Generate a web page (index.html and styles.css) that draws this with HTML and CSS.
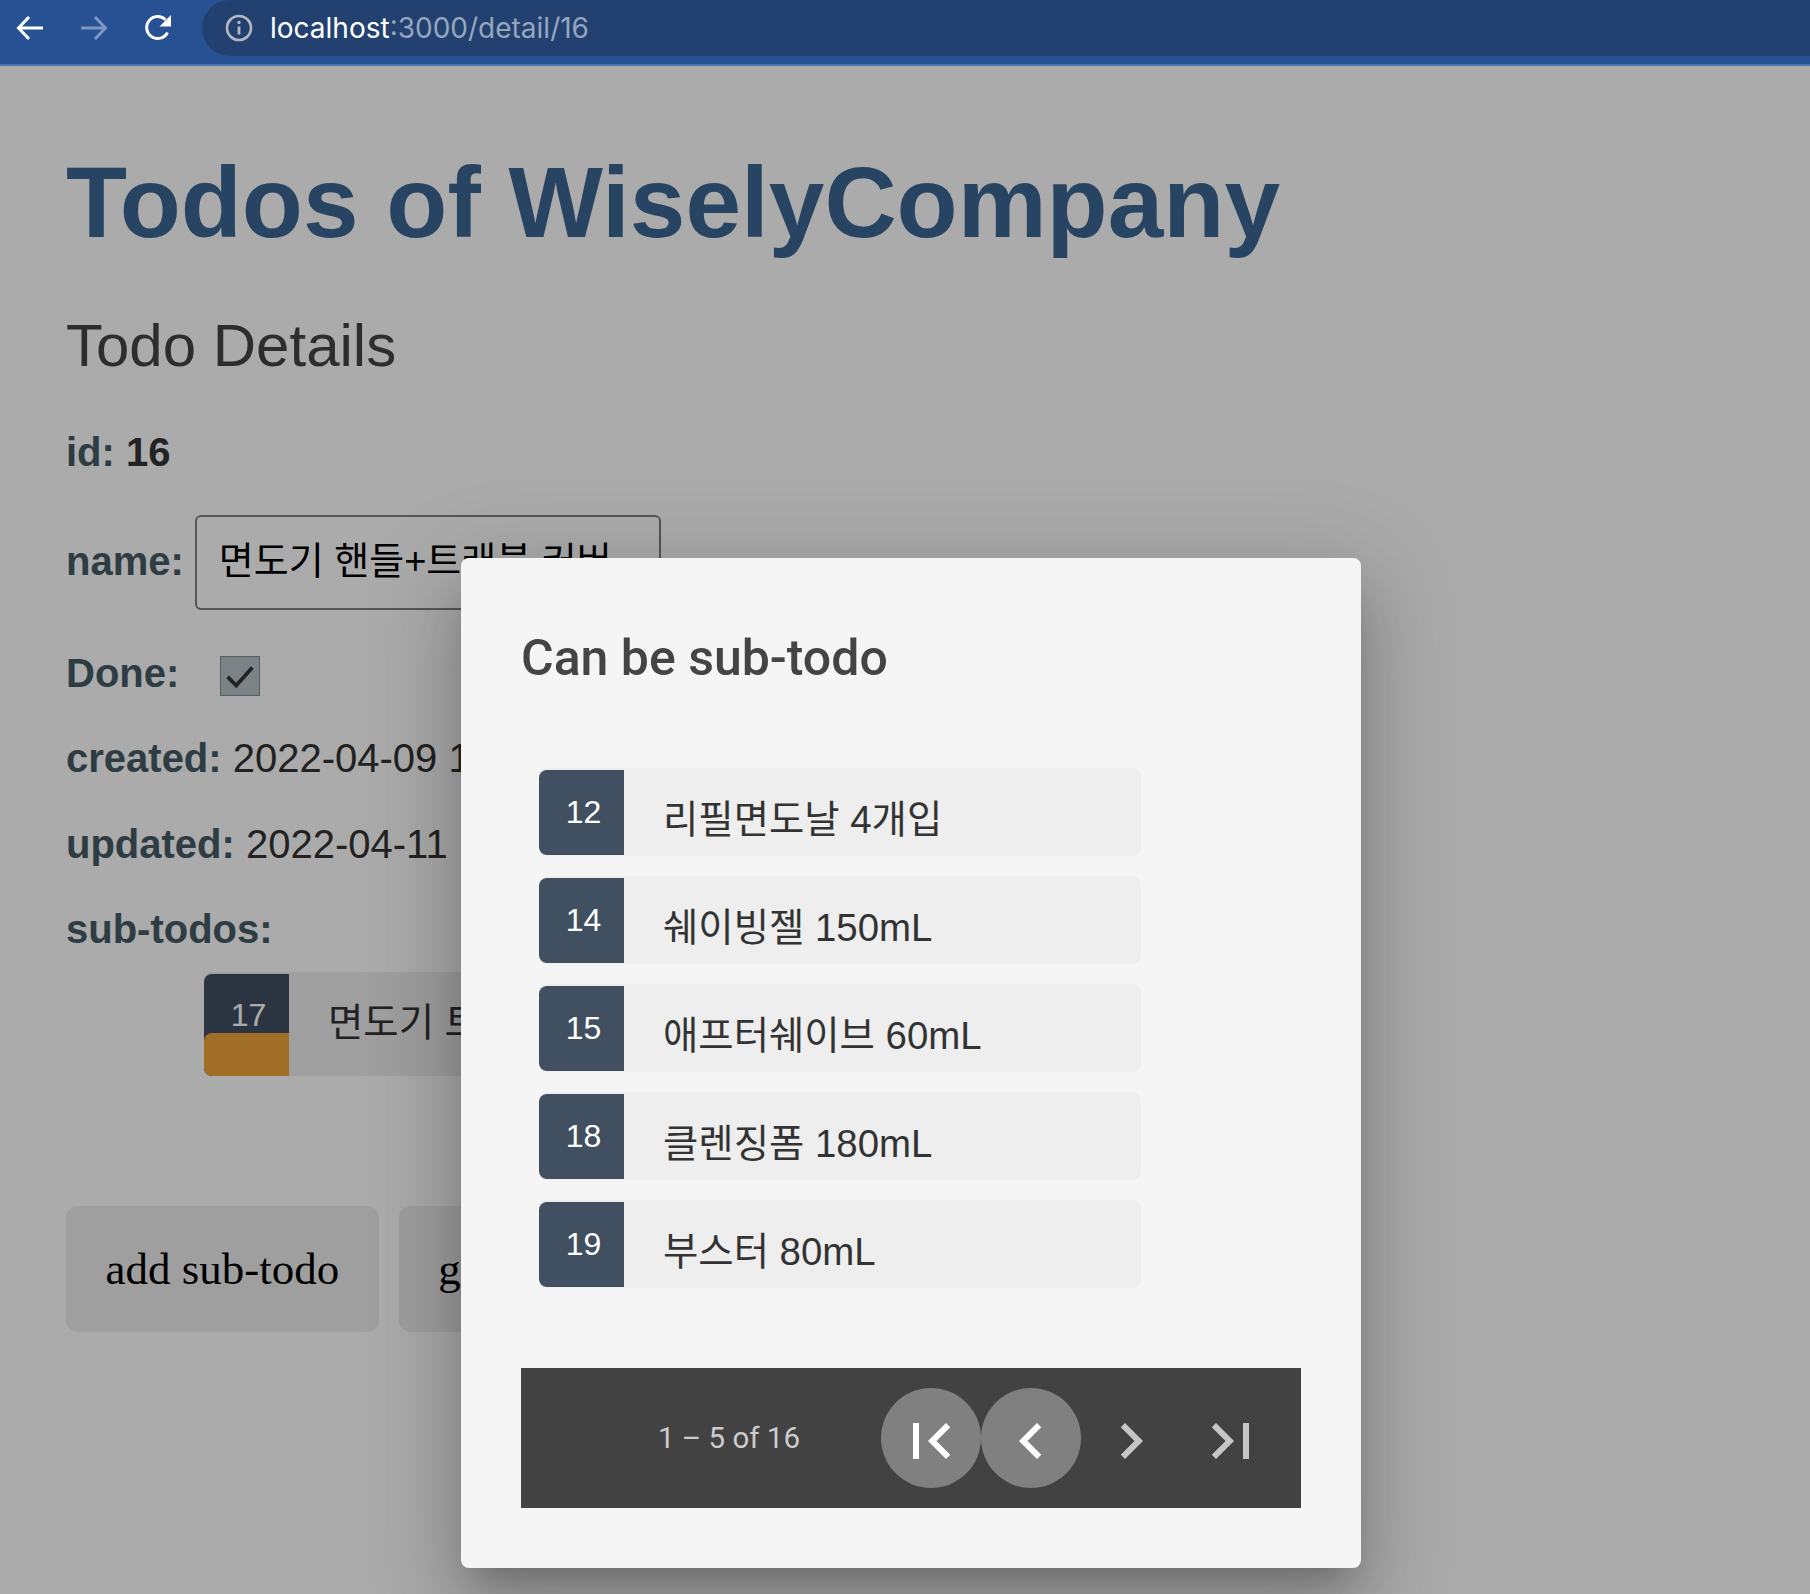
FILE: index.html
```html
<!DOCTYPE html>
<html lang="ko">
<head>
  <meta charset="UTF-8">
  <meta name="viewport" content="width=device-width, initial-scale=1.0">
  <title>Todos of WiselyCompany</title>
  <link rel="stylesheet" href="styles.css">
</head>
<body>

  <header class="toolbar">
    <svg class="nav-icon" viewBox="0 0 28 28"><path d="M27 14H3M13 3L2.500 14L13 25" fill="none" stroke="#fff" stroke-width="3"/></svg>
    <svg class="nav-icon nav-off" viewBox="0 0 28 28"><path d="M1 14H25M15 3L25.500 14L15 25" fill="none" stroke="#7d97c0" stroke-width="3"/></svg>
    <svg class="nav-icon" viewBox="0 0 28 28"><path d="M23.500 18.500A11 11 0 1 1 21.500 5.800" fill="none" stroke="#fff" stroke-width="3"/><path d="M27 1V12.500H15.500z" fill="#fff"/></svg>
    <div class="address">
      <svg class="info-icon" viewBox="0 0 28 28"><circle cx="14" cy="14" r="12" fill="none" stroke="#b4b8bf" stroke-width="2.600"/><path d="M14 12.500V20.500" stroke="#b4b8bf" stroke-width="2.800"/><circle cx="14" cy="8.500" r="1.700" fill="#b4b8bf"/></svg>
      <span class="host">localhost</span><span class="path">:3000/detail/16</span>
    </div>
  </header>

  <main class="page">
    <h1>Todos of WiselyCompany</h1>
    <h2>Todo Details</h2>

    <div class="field id-field"><span class="label">id:</span> <b>16</b></div>

    <div class="field name-field">
      <label class="label" for="todoName">name:</label>
      <input id="todoName" class="name-input" type="text" value="면도기 핸들+트래블 커버">
    </div>

    <div class="field done-field">
      <span class="label">Done:</span>
      <span class="check">
        <svg viewBox="0 0 40 40"><path d="M7 21L16 30L33 11" fill="none" stroke="#333" stroke-width="4"/></svg>
      </span>
    </div>

    <div class="field created-field"><span class="label">created:</span> 2022-04-09 15:22:01</div>
    <div class="field updated-field"><span class="label">updated:</span> 2022-04-11 10:32:18</div>
    <div class="field subs-field"><span class="label">sub-todos:</span></div>

    <div class="sub-row">
      <div class="sub-badge"><span class="sub-id">17</span><span class="sub-flag"></span></div>
      <span class="sub-name">면도기 트래블 커버</span>
    </div>

    <div class="actions">
      <button type="button" class="action">add sub-todo</button>
      <button type="button" class="action">go back</button>
    </div>
  </main>

  <div class="scrim"></div>

  <section class="dialog">
    <h3 class="dialog-title">Can be sub-todo</h3>

    <ul class="todo-list">
      <li class="todo"><span class="badge">12</span><span class="todo-name">리필면도날 4개입</span></li>
      <li class="todo"><span class="badge">14</span><span class="todo-name">쉐이빙젤 150mL</span></li>
      <li class="todo"><span class="badge">15</span><span class="todo-name">애프터쉐이브 60mL</span></li>
      <li class="todo"><span class="badge">18</span><span class="todo-name">클렌징폼 180mL</span></li>
      <li class="todo"><span class="badge">19</span><span class="todo-name">부스터 80mL</span></li>
    </ul>

    <div class="pager">
      <span class="pager-label">1 – 5 of 16</span>
      <button type="button" class="pager-btn on"><svg viewBox="0 0 24 24"><path d="M18.410 16.590L13.820 12l4.590-4.580L17 6l-6 6 6 6zM6 6h2v12H6z"/></svg></button>
      <button type="button" class="pager-btn on"><svg viewBox="0 0 24 24"><path d="M15.410 7.410L14 6l-6 6 6 6 1.410-1.410L10.830 12z"/></svg></button>
      <button type="button" class="pager-btn"><svg viewBox="0 0 24 24"><path d="M10 6L8.590 7.410 13.170 12l-4.580 4.590L10 18l6-6z"/></svg></button>
      <button type="button" class="pager-btn"><svg viewBox="0 0 24 24"><path d="M5.590 7.410L10.180 12l-4.590 4.590L7 18l6-6-6-6zM16 6h2v12h-2z"/></svg></button>
    </div>
  </section>

</body>
</html>
```

FILE: styles.css
```css
html, body {
  margin: 0;
  padding: 0;
}
body {
  position: relative;
  height: 1594px;
  overflow: hidden;
  background-color: #fff;
  color: #333;
  font-family: "Liberation Sans", "Noto Sans CJK KR", sans-serif;
}

/* browser bar */
.toolbar {
  display: flex;
  align-items: flex-start;
  height: 64px;
  border-bottom: 2px solid #4a74ae;
  background-color: #285194;
}
.nav-icon {
  flex: none;
  width: 28px;
  height: 28px;
  margin: 14px 0 0 16px;
}
.nav-off {
  margin-left: 36px;
}
.nav-icon:nth-child(3) {
  margin-left: 36px;
}
.address {
  flex: 1;
  display: flex;
  align-items: center;
  height: 56px;
  margin-left: 30px;
  padding-left: 23px;
  border-radius: 28px 0 0 28px;
  background-color: #234170;
  font-family: Inter, sans-serif;
  font-size: 28px;
}
.info-icon {
  width: 28px;
  height: 28px;
  margin-right: 17px;
}
.host {
  color: #fff;
}
.path {
  color: #96a6bf;
}

/* page */
.page {
  padding: 78px 0 0 66px;
}
h1 {
  margin: 0;
  color: #3d6694;
  font-size: 100px;
  line-height: 116px;
}
h2 {
  margin: 51px 0 0;
  color: #444;
  font-size: 60px;
  font-weight: normal;
  line-height: 70px;
}
.field {
  margin-top: 41px;
  font-size: 40px;
  line-height: 46px;
}
.label {
  color: #455a64;
  font-weight: bold;
}
.id-field {
  margin-top: 48px;
}
.name-field {
  display: flex;
  align-items: center;
  margin-top: 40px;
}
.name-field .label {
  margin: 0 11px 4px 0;
}
.name-input {
  box-sizing: border-box;
  width: 466px;
  height: 95px;
  padding: 0 22px 10px;
  border: 2px solid #808080;
  border-radius: 6px;
  background: transparent;
  color: #000;
  font-family: "Liberation Sans", "Noto Sans CJK KR", sans-serif;
  font-size: 38px;
}
.done-field {
  display: flex;
  align-items: flex-start;
  margin-top: 40px;
}
.check {
  box-sizing: border-box;
  width: 40px;
  height: 40px;
  margin: 6px 0 0 41px;
  border: 1px solid #7d8b92;
  background-color: #b8c4ca;
}
.check svg {
  display: block;
  width: 100%;
  height: 100%;
}
.created-field {
  margin-top: 39px;
}
.updated-field {
  margin-top: 40px;
}
.subs-field {
  margin-top: 39px;
}
.sub-row {
  display: flex;
  align-items: flex-start;
  width: 602px;
  height: 104px;
  margin: 20px 0 0 138px;
  border-radius: 8px;
  background-color: #eee;
}
.sub-badge {
  position: relative;
  flex: none;
  width: 85px;
  height: 102px;
  margin-top: 2px;
  border-radius: 8px 0 0 8px;
  background-color: #405061;
  overflow: hidden;
}
.sub-id {
  display: block;
  padding: 23px 0 0 4px;
  color: #fff;
  font-size: 32px;
  line-height: 36px;
  text-align: center;
}
.sub-flag {
  position: absolute;
  left: 0;
  right: 0;
  bottom: 0;
  height: 43px;
  border-radius: 8px 0 0 8px;
  background-color: #f0a53c;
}
.sub-name {
  margin: 28px 0 0 39px;
  font-size: 38.400px;
  line-height: 46px;
}
.actions {
  display: flex;
  gap: 20px;
  margin-top: 130px;
}
.action {
  height: 126px;
  padding: 0 39.500px;
  border: none;
  border-radius: 12px;
  background-color: #eee;
  color: #000;
  font-family: "Liberation Serif", serif;
  font-size: 45px;
}

/* dialog */
.scrim {
  position: absolute;
  top: 66px;
  left: 0;
  right: 0;
  bottom: 0;
  background-color: rgba(0, 0, 0, 0.33);
}
.dialog {
  position: absolute;
  top: 558px;
  left: 461px;
  box-sizing: border-box;
  width: 900px;
  height: 1010px;
  padding: 68px 60px 60px;
  border-radius: 8px;
  background-color: #f5f5f5;
  box-shadow: 0 22px 30px -14px rgba(0, 0, 0, 0.2), 0 48px 76px 6px rgba(0, 0, 0, 0.14), 0 18px 92px 16px rgba(0, 0, 0, 0.12);
}
.dialog-title {
  margin: 0;
  color: #444;
  font-family: Roboto, sans-serif;
  font-size: 50px;
  font-weight: 500;
  line-height: 64px;
}
.todo-list {
  width: 602px;
  margin: 78px 0 0 18px;
  padding: 0;
  list-style: none;
}
.todo {
  display: flex;
  align-items: flex-start;
  height: 88px;
  margin-bottom: 20px;
  border-radius: 8px;
  background-color: #eee;
}
.badge {
  flex: none;
  width: 85px;
  height: 85px;
  margin-top: 2px;
  padding: 24px 0 0 4px;
  box-sizing: border-box;
  border-radius: 8px 0 0 8px;
  background-color: #405061;
  color: #fff;
  font-size: 32px;
  line-height: 36px;
  text-align: center;
}
.todo-name {
  margin: 30px 0 0 39px;
  font-size: 38.400px;
  line-height: 44px;
}
.pager {
  display: flex;
  align-items: center;
  justify-content: flex-end;
  height: 140px;
  margin-top: 80px;
  padding-right: 20px;
  background-color: #424242;
}
.pager-label {
  margin-right: 81px;
  color: #ccc;
  font-family: Roboto, sans-serif;
  font-size: 29.500px;
}
.pager-btn {
  display: flex;
  align-items: center;
  justify-content: center;
  width: 100px;
  height: 100px;
  padding: 0;
  border: none;
  border-radius: 50%;
  background: none;
  fill: #c6c6c6;
}
.pager-btn.on {
  background-color: #808080;
  fill: #fff;
}
.pager-btn svg {
  width: 72px;
  height: 72px;
  margin-top: 6px;
}
```
